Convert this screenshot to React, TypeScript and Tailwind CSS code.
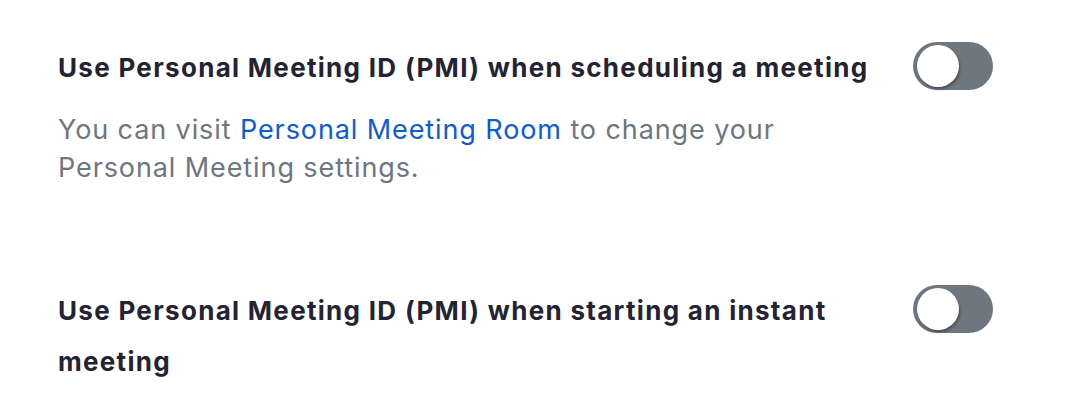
import React from "react";

function Toggle() {
  return (
    <div className="relative w-[80px] h-[48px] shrink-0 rounded-full bg-[#6e7680]">
      <div className="absolute left-[4px] top-[3px] w-[42px] h-[42px] rounded-full bg-white shadow-[1px_2px_3px_rgba(0,0,0,0.35)]" />
    </div>
  );
}

export default function App() {
  return (
    <div
      className="w-[1092px] h-[412px] bg-white pl-[58px] pr-[99px] pt-[42px]"
      style={{ fontFamily: "Inter, 'Noto Sans', sans-serif" }}
    >
      <div className="flex items-start justify-between gap-[40px]">
        <div className="flex-1">
          <div className="text-[26px] leading-[51px] font-bold tracking-[1.3px] text-[#232333]">
            Use Personal Meeting ID (PMI) when scheduling a meeting
          </div>
        </div>
        <Toggle />
      </div>
      <div className="mt-[18px] w-[760px] text-[27px] leading-[38px] tracking-[0.9px] text-[#6e7680]">
        You can visit <span className="text-[#0e5ccf]">Personal Meeting Room</span> to change your Personal Meeting settings.
      </div>
      <div className="mt-[98px] flex items-start justify-between gap-[40px]">
        <div className="flex-1">
          <div className="text-[26px] leading-[51px] font-bold tracking-[1.3px] text-[#232333]">
            Use Personal Meeting ID (PMI) when starting an instant meeting
          </div>
        </div>
        <Toggle />
      </div>
    </div>
  );
}
